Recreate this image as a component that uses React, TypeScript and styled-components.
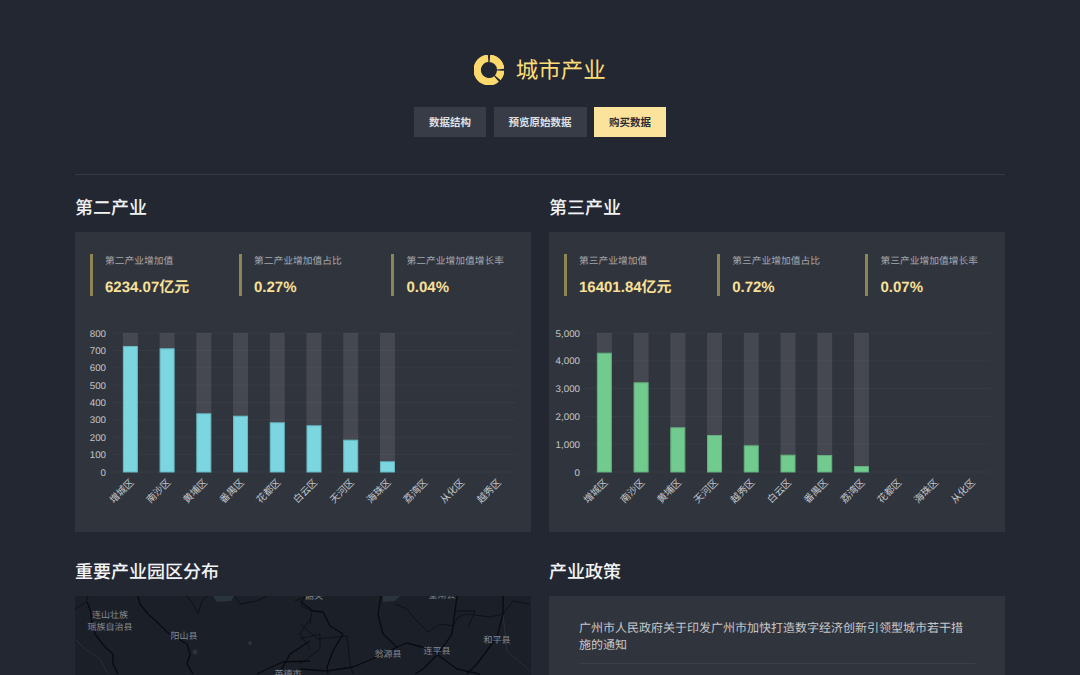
import React from "react";
import styled, { createGlobalStyle } from "styled-components";

const Global = createGlobalStyle`
  html, body { margin: 0; padding: 0; background: #232732; overflow: hidden; height: 675px; }
  body {
    font-family: "Liberation Sans", "Noto Sans CJK SC", sans-serif;
    text-rendering: geometricPrecision;
  }
`;

const Page = styled.div`
  width: 930px;
  margin: 0 auto;
  padding-top: 55px;
`;
const Header = styled.header`
  display: flex;
  flex-direction: column;
  align-items: center;
  padding-bottom: 37px;
  border-bottom: 1px solid rgba(255, 255, 255, 0.09);
`;
const Brand = styled.div`
  display: flex;
  align-items: center;
  gap: 11.5px;
  height: 30px;
`;
const BrandName = styled.h1`
  margin: 0;
  padding-top: 2px;
  font-size: 22.5px;
  font-weight: 400;
  line-height: 28px;
  color: #fbdc78;
`;
const Actions = styled.div`
  display: flex;
  justify-content: space-between;
  width: 252px;
  margin-top: 22px;
`;
const ActionButton = styled.button<{ $primary?: boolean }>`
  height: 30px;
  padding: 0 15px 2px;
  border: 0;
  font-family: inherit;
  font-size: 10.5px;
  font-weight: 700;
  background: ${(p) => (p.$primary ? "#fce39b" : "#383c47")};
  color: ${(p) => (p.$primary ? "#2a2c33" : "#dfe0e3")};
`;
const Columns = styled.div`
  display: grid;
  grid-template-columns: 456px 456px;
  column-gap: 18px;
`;
const Section = styled.section<{ $top: number }>`
  margin-top: ${(p) => p.$top}px;
`;
const SectionTitle = styled.h2`
  margin: 0 0 13px;
  font-size: 18px;
  line-height: 22px;
  font-weight: 500;
  color: #f2f3f4;
`;
const Panel = styled.div`
  background: #30343d;
  height: 300px;
  overflow: hidden;
`;
const StatRow = styled.div`
  display: flex;
  justify-content: space-between;
  margin: 22px 27px 0 15px;
`;
const Stat = styled.div`
  height: 42px;
  padding-left: 12px;
  border-left: 3px solid #8f8453;
  white-space: nowrap;
`;
const StatLabel = styled.div`
  padding-top: 1px;
  font-size: 9.75px;
  line-height: 14px;
  color: #a4a6aa;
`;
const StatValue = styled.div`
  margin-top: 9px;
  font-size: 15px;
  line-height: 20px;
  font-weight: 700;
  color: #f9e098;
`;
const ChartFrame = styled.svg`
  display: block;
  margin-top: 24px;
`;
const AxisLabel = styled.text`
  font-size: 9.75px;
  fill: #c4c6c9;
`;
const MapPanel = styled(Panel)`
  background: #1b1f27;
`;
const MapCanvas = styled.svg`
  display: block;
`;
const MapPlace = styled.text`
  font-size: 9px;
  fill: #858a92;
  text-anchor: middle;
`;
const PolicyList = styled.div`
  padding: 19px 30px 0;
`;
const PolicyItem = styled.div`
  padding: 5px 4px 10px 0;
  font-size: 12px;
  line-height: 16.5px;
  color: #c6c8cb;
  border-bottom: 1px solid #3c4049;
`;

const Logo = () => (
  <svg width="30" height="30" viewBox="0 0 30 30" fill="none" stroke="#fbd96c" strokeWidth="7.5">
    <path d="M15.9 3.29A11.75 11.75 0 0 1 26.71 14.1" />
    <path d="M26.71 15.6A11.75 11.75 0 0 1 23.8 22.9" />
    <path d="M22.5 24A11.75 11.75 0 1 1 14.1 3.29" />
  </svg>
);

type ChartProps = {
  ticks: string[];
  names: string[];
  tops: number[];
  color: string;
  edge: string;
};

const PLOT_LEFT = 37;
const PLOT_RIGHT = 441;
const Y_TOP = 13;
const Y_ZERO = 152;

const BarChart = ({ ticks, names, tops, color, edge }: ChartProps) => {
  const step = (PLOT_RIGHT - PLOT_LEFT) / names.length;
  const rowH = (Y_ZERO - Y_TOP) / (ticks.length - 1);
  return (
    <ChartFrame width="456" height="200" viewBox="0 0 456 200">
      {ticks.map((t, i) => {
        const y = Y_ZERO - i * rowH;
        return (
          <g key={t}>
            <line x1={PLOT_LEFT} x2={PLOT_RIGHT} y1={y} y2={y} stroke="rgba(255,255,255,0.035)" />
            <AxisLabel x="31" y={y + 3.5} textAnchor="end">{t}</AxisLabel>
          </g>
        );
      })}
      {names.map((n, i) => {
        const cx = PLOT_LEFT + step * (i + 0.5);
        const top = tops[i];
        return (
          <g key={n}>
            {top !== undefined && (
              <>
                <rect x={cx - 7.5} y={Y_TOP} width="15" height={Y_ZERO - Y_TOP} fill="rgba(255,255,255,0.1)" />
                <rect x={cx - 7} y={top + 0.5} width="14" height={Y_ZERO - top - 0.5} fill={color} stroke={edge} />
              </>
            )}
            <AxisLabel x={cx + 4} y={163} textAnchor="end" transform={`rotate(-45 ${cx + 4} 163)`}>{n}</AxisLabel>
          </g>
        );
      })}
    </ChartFrame>
  );
};

const thick = [
  "M138 597L140 605L148 615L157 623L167 633L187 645L190 655L187 665L193 675",
  "M87 603L90 610L92 623L95 635L105 648L113 655L113 665L118 675",
  "M381 597L378 615L383 635L397 648L407 644L422 648L438 655L423 670L415 675",
  "M300 602L313 612L323 613L330 627L343 635L333 652L327 668L328 675",
  "M300 670L327 672L353 668L377 658L397 648",
  "M457 597L455 612L452 635L438 655",
  "M503 597L503 615L497 638L477 665L467 675",
  "M438 656L457 670L480 675",
  "M310 642L290 655L283 668L277 675",
  "M310 662L283 663L267 670L257 675",
];
const thin = [
  "M187 597L193 605L198 615L202 602L207 597",
  "M235 597L240 605L257 602L267 597",
  "M75 610L86 603L88 597",
  "M295 602L308 597",
  "M305 597L301 607L312 612L310 625",
  "M395 605L407 610L415 620L428 633L440 625L453 627L458 618L467 615L490 618L503 615L513 602L530 605",
  "M300 625L318 640L347 637L350 665L353 675",
  "M310 620L300 635L310 650",
  "M300 640L320 635L320 650L300 665",
  "M455 612L475 612L468 628",
];
const faint = ["M503 615L507 652L530 672", "M75 640L85 650L100 660L108 675"];

export default function App() {
  return (
    <Page>
      <Global />
      <Header>
        <Brand>
          <Logo />
          <BrandName>城市产业</BrandName>
        </Brand>
        <Actions>
          <ActionButton>数据结构</ActionButton>
          <ActionButton>预览原始数据</ActionButton>
          <ActionButton $primary>购买数据</ActionButton>
        </Actions>
      </Header>
      <Columns>
        <Section $top={22}>
          <SectionTitle>第二产业</SectionTitle>
          <Panel>
            <StatRow>
              <Stat>
                <StatLabel>第二产业增加值</StatLabel>
                <StatValue>6234.07亿元</StatValue>
              </Stat>
              <Stat>
                <StatLabel>第二产业增加值占比</StatLabel>
                <StatValue>0.27%</StatValue>
              </Stat>
              <Stat>
                <StatLabel>第二产业增加值增长率</StatLabel>
                <StatValue>0.04%</StatValue>
              </Stat>
            </StatRow>
            <BarChart
              ticks={["0", "100", "200", "300", "400", "500", "600", "700", "800"]}
              names={["增城区", "南沙区", "黄埔区", "番禺区", "花都区", "白云区", "天河区", "海珠区", "荔湾区", "从化区", "越秀区"]}
              tops={[26, 28.3, 93.3, 95.7, 102.3, 105.3, 119.7, 141.3]}
              color="#7bd6e0"
              edge="#68b8c2"
            />
          </Panel>
        </Section>
        <Section $top={22}>
          <SectionTitle>第三产业</SectionTitle>
          <Panel>
            <StatRow>
              <Stat>
                <StatLabel>第三产业增加值</StatLabel>
                <StatValue>16401.84亿元</StatValue>
              </Stat>
              <Stat>
                <StatLabel>第三产业增加值占比</StatLabel>
                <StatValue>0.72%</StatValue>
              </Stat>
              <Stat>
                <StatLabel>第三产业增加值增长率</StatLabel>
                <StatValue>0.07%</StatValue>
              </Stat>
            </StatRow>
            <BarChart
              ticks={["0", "1,000", "2,000", "3,000", "4,000", "5,000"]}
              names={["增城区", "南沙区", "黄埔区", "天河区", "越秀区", "白云区", "番禺区", "荔湾区", "花都区", "海珠区", "从化区"]}
              tops={[32.7, 62.3, 107.3, 115, 125.3, 134.7, 135, 146]}
              color="#72cb8e"
              edge="#62ae7c"
            />
          </Panel>
        </Section>
        <Section $top={29}>
          <SectionTitle>重要产业园区分布</SectionTitle>
          <MapPanel>
            <MapCanvas width="456" height="300" viewBox="75 597 456 300">
              <path d="M213 597h21l-3 5l-14 1z" fill="#2a343e" />
              <path d="M383 597h17l-5 5l-12 1z" fill="#2a343e" />
              <circle cx="195" cy="653" r="2.5" fill="#2a343e" />
              <circle cx="250" cy="644" r="2" fill="#2a343e" />
              {faint.map((d) => (
                <path key={d} d={d} fill="none" stroke="#33303a" strokeWidth="0.8" />
              ))}
              {thin.map((d) => (
                <path key={d} d={d} fill="none" stroke="#0b0e13" strokeWidth="0.8" />
              ))}
              {thick.map((d) => (
                <path key={d} d={d} fill="none" stroke="#090b10" strokeWidth="1.3" strokeLinejoin="round" />
              ))}
              <MapPlace x="110" y="619">连山壮族</MapPlace>
              <MapPlace x="110" y="631">瑶族自治县</MapPlace>
              <MapPlace x="184" y="640">阳山县</MapPlace>
              <MapPlace x="314" y="600">韶关</MapPlace>
              <MapPlace x="442" y="599">全南县</MapPlace>
              <MapPlace x="388" y="658">翁源县</MapPlace>
              <MapPlace x="437" y="655">连平县</MapPlace>
              <MapPlace x="497" y="644">和平县</MapPlace>
              <MapPlace x="288" y="678">英德市</MapPlace>
            </MapCanvas>
          </MapPanel>
        </Section>
        <Section $top={29}>
          <SectionTitle>产业政策</SectionTitle>
          <Panel>
            <PolicyList>
              <PolicyItem>广州市人民政府关于印发广州市加快打造数字经济创新引领型城市若干措施的通知</PolicyItem>
            </PolicyList>
          </Panel>
        </Section>
      </Columns>
    </Page>
  );
}
